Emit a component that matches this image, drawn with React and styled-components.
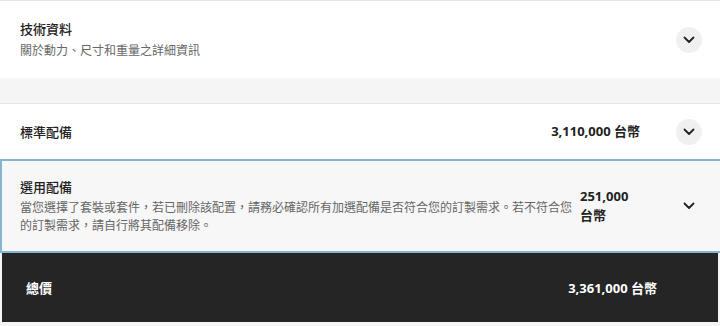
import React from "react";
import styled, { createGlobalStyle } from "styled-components";

const Global = createGlobalStyle`
  html, body { margin: 0; padding: 0; }
  body {
    background: #f5f5f5;
    font-family: "Noto Sans", "Noto Sans CJK TC", sans-serif;
    color: #222;
    width: 720px;
    height: 326px;
    overflow: hidden;
  }
`;

const Page = styled.div`
  display: flex;
  flex-direction: column;
  width: 720px;
`;

const Card = styled.section`
  display: flex;
  align-items: center;
  box-sizing: border-box;
  min-height: ${(p) => p.$h}px;
  padding: 0 18px 0 20px;
  background: ${(p) => (p.$active ? "#f7f7f7" : "#fff")};
  border-top: 1px solid #e6e6e6;
  ${(p) =>
    p.$active &&
    `
    border: 2px solid #85b4d4;
    border-right: none;
    padding-left: 18px;
  `}
`;

const Spacer = styled.div`
  height: 25px;
  background: #f5f5f5;
`;

const Info = styled.div`
  flex: 1;
  display: flex;
  flex-direction: column;
  min-width: 0;
`;

const Title = styled.div`
  font-size: 13px;
  font-weight: 500;
  line-height: 20px;
  color: #222;
`;

const Desc = styled.div`
  font-size: 12px;
  line-height: 18px;
  color: #666;
  margin-top: ${(p) => p.$mt || 0}px;
`;

const Price = styled.div`
  flex: none;
  font-size: 13px;
  font-weight: 700;
  line-height: 19px;
  color: #222;
  white-space: ${(p) => (p.$w ? "normal" : "nowrap")};
  width: ${(p) => (p.$w ? `${p.$w}px` : "auto")};
  margin-left: 4px;
  margin-right: 36px;
`;

const Toggle = styled.button`
  flex: none;
  width: 26px;
  height: 26px;
  border-radius: 50%;
  border: none;
  padding: 0;
  background: ${(p) => (p.$plain ? "transparent" : "#f0f0f0")};
  display: flex;
  align-items: center;
  justify-content: center;
`;

const Total = styled.section`
  display: flex;
  align-items: center;
  justify-content: space-between;
  margin: 0 2px;
  height: 69px;
  padding: 0 61px 0 24px;
  background: #252525;
  color: #fff;
  font-size: 13px;
  font-weight: 700;
`;

const Chevron = () => (
  <svg width="12" height="8" viewBox="0 0 12 8" fill="none">
    <path d="M1.5 1.5 L6 6 L10.5 1.5" stroke="#222" strokeWidth="1.8" strokeLinecap="round" strokeLinejoin="round" />
  </svg>
);

export default function App() {
  return (
    <Page lang="zh-Hant-TW">
      <Global />
      <Card $h={78}>
        <Info>
          <Title>技術資料</Title>
          <Desc $mt={3}>關於動力、尺寸和重量之詳細資訊</Desc>
        </Info>
        <Toggle><Chevron /></Toggle>
      </Card>
      <Spacer />
      <Card $h={56}>
        <Info>
          <Title>標準配備</Title>
        </Info>
        <Price>3,110,000 台幣</Price>
        <Toggle><Chevron /></Toggle>
      </Card>
      <Card $h={94} $active>
        <Info>
          <Title>選用配備</Title>
          <Desc $mt={2}>
            當您選擇了套裝或套件，若已刪除該配置，請務必確認所有加選配備是否符合您的訂製需求。若不符合您的訂製需求，請自行將其配備移除。
          </Desc>
        </Info>
        <Price $w={60}>251,000 台幣</Price>
        <Toggle $plain><Chevron /></Toggle>
      </Card>
      <Total>
        <span>總價</span>
        <span>3,361,000 台幣</span>
      </Total>
    </Page>
  );
}
